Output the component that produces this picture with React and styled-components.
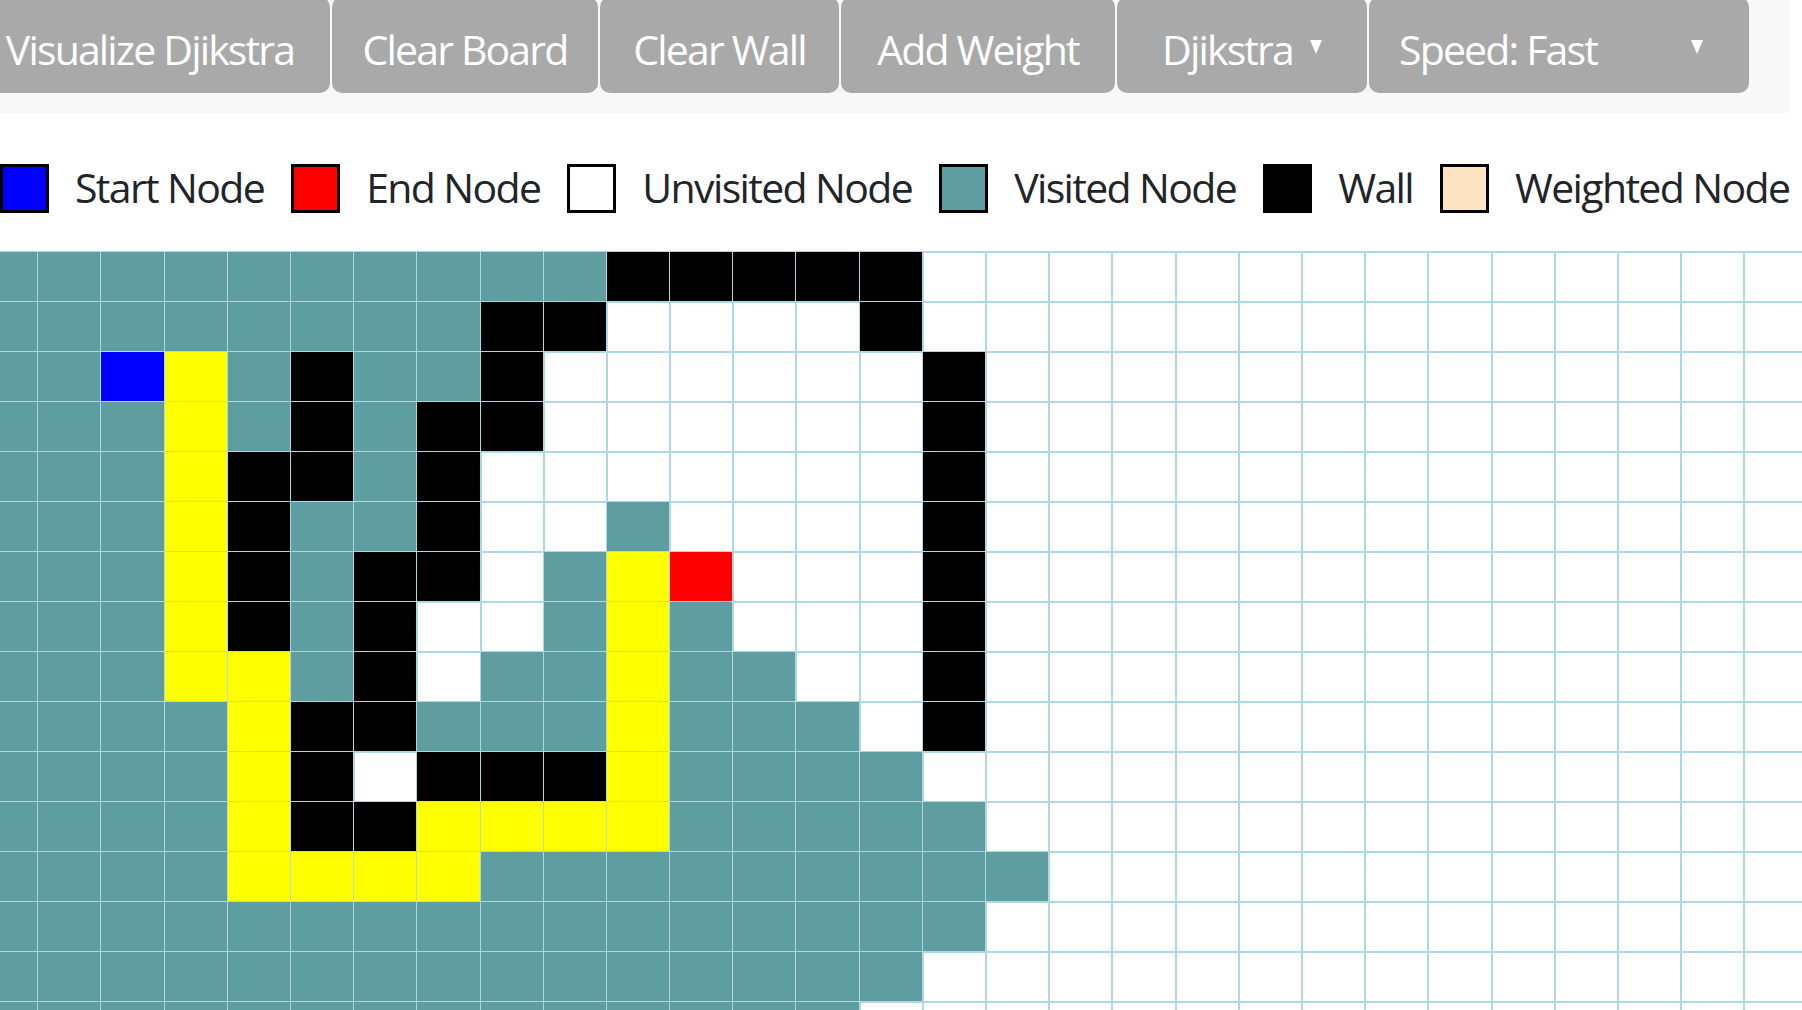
import React from 'react';
import styled, { createGlobalStyle } from 'styled-components';

const GlobalStyle = createGlobalStyle`
  html, body {
    margin: 0;
    padding: 0;
    overflow: hidden;
    background: #fff;
  }
  body {
    font-family: "Open Sans", "Noto Sans", sans-serif;
  }
`;

// Grid layout, one letter per node
// V visited, B wall, W unvisited, Y shortest path, S start, E end
const COLS = 29;
const ROWS = [
  'VVVVVVVVVVBBBBB',
  'VVVVVVVVBBWWWWB',
  'VVSYVBVVBWWWWWWB',
  'VVVYVBVBBWWWWWWB',
  'VVVYBBVBWWWWWWWB',
  'VVVYBVVBWWVWWWWB',
  'VVVYBVBBWVYEWWWB',
  'VVVYBVBWWVYVWWWB',
  'VVVYYVBWVVYVVWWB',
  'VVVVYBBVVVYVVVWB',
  'VVVVYBWBBBYVVVVW',
  'VVVVYBBYYYYVVVVV',
  'VVVVYYYYVVVVVVVVV',
  'VVVVVVVVVVVVVVVV',
  'VVVVVVVVVVVVVVV',
  'VVVVVVVVVVVVVV',
].map((r) => r.padEnd(COLS, 'W').split(''));

const NODE_COLORS = {
  V: '#5f9ea0',
  B: '#000000',
  W: '#ffffff',
  Y: '#ffff00',
  S: '#0000ff',
  E: '#ff0000',
};

const LINE = '#add8e6';

const Page = styled.div`
  width: 1802px;
  height: 1010px;
  overflow: hidden;
`;

const Navbar = styled.nav`
  display: flex;
  align-items: flex-start;
  gap: 2px;
  width: 1820px;
  margin: -3px 0 0 -30px;
  padding-bottom: 20px;
  background: #f8f8f8;
`;

const NavButton = styled.button`
  display: flex;
  align-items: center;
  justify-content: ${(p) => (p.$spread ? 'space-between' : 'center')};
  gap: 17px;
  width: ${(p) => p.$w}px;
  height: 96px;
  padding: 7px ${(p) => (p.$spread ? '46px 0 30px' : '0 0')};
  border: none;
  border-radius: 10px;
  background: #a9a9a9;
  color: #fff;
  font-family: "Open Sans", "Noto Sans", sans-serif;
  font-size: 41px;
  letter-spacing: -0.045em;
  cursor: pointer;
  box-sizing: border-box;
`;

const Caret = styled.span`
  width: 0;
  height: 0;
  border-left: 6.5px solid transparent;
  border-right: 6.5px solid transparent;
  border-top: 14px solid #fff;
  margin-bottom: 3px;
`;

const Legend = styled.div`
  display: flex;
  align-items: center;
  gap: 27px;
  margin-top: 51px;
  height: 49px;
`;

const LegendItem = styled.div`
  display: flex;
  align-items: center;
  gap: 26px;
`;

const Swatch = styled.span`
  width: 49px;
  height: 49px;
  box-sizing: border-box;
  border: 3px solid #000;
  background: ${(p) => p.$color};
`;

const LegendLabel = styled.span`
  padding-bottom: 4px;
  font-size: 41px;
  letter-spacing: -0.04em;
  color: #212529;
  white-space: nowrap;
`;

const Board = styled.div`
  display: grid;
  grid-template-columns: repeat(${COLS}, 63.2px);
  grid-auto-rows: 50px;
  margin: 38px 0 0 -25px;
  border-top: 1px solid ${LINE};
`;

const Node = styled.div`
  box-sizing: border-box;
  background: ${(p) => NODE_COLORS[p.$kind]};
  border: ${(p) => (p.$kind === 'W' ? `1px solid ${LINE}` : 'none')};
  border-right: 1px solid ${LINE};
  border-bottom: 1px solid ${LINE};
`;

const legend = [
  { label: 'Start Node', color: '#0000ff' },
  { label: 'End Node', color: '#ff0000' },
  { label: 'Unvisited Node', color: '#ffffff' },
  { label: 'Visited Node', color: '#5f9ea0' },
  { label: 'Wall', color: '#000000' },
  { label: 'Weighted Node', color: '#ffe4c4' },
];

const App = () => (
  <Page>
    <GlobalStyle />
    <Navbar>
      <NavButton $w={360}>Visualize Djikstra</NavButton>
      <NavButton $w={266}>Clear Board</NavButton>
      <NavButton $w={239}>Clear Wall</NavButton>
      <NavButton $w={274}>Add Weight</NavButton>
      <NavButton $w={250}>
        Djikstra <Caret />
      </NavButton>
      <NavButton $w={380} $spread>
        Speed: Fast <Caret />
      </NavButton>
    </Navbar>

    <Legend>
      {legend.map((item) => (
        <LegendItem key={item.label}>
          <Swatch $color={item.color} />
          <LegendLabel>{item.label}</LegendLabel>
        </LegendItem>
      ))}
    </Legend>

    <Board>
      {ROWS.map((row, r) =>
        row.map((kind, c) => <Node key={`${r}-${c}`} $kind={kind} />)
      )}
    </Board>
  </Page>
);

export default App;
